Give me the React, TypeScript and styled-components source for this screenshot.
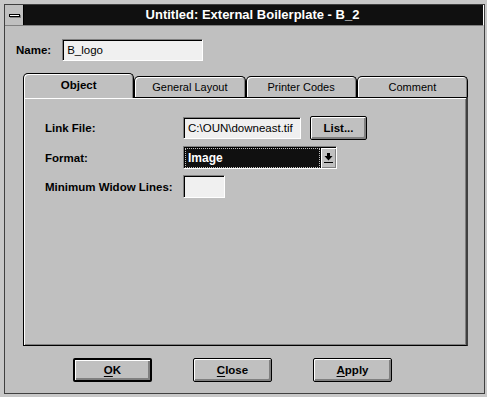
import React from 'react';
import styled, { createGlobalStyle } from 'styled-components';

const GlobalStyle = createGlobalStyle`
  html, body {
    margin: 0;
    padding: 0;
    background: #c8c8c8;
  }
  body {
    font-family: 'Liberation Sans', Arial, sans-serif;
  }
`;

const Screen = styled.div`
  width: 487px;
  height: 397px;
  box-sizing: border-box;
  padding: 4px 2px 3px 4px;
`;

const Window = styled.div`
  height: 100%;
  box-sizing: border-box;
  border: 1px solid #404040;
  background: #c0c0c0;
  display: flex;
  flex-direction: column;
`;

const TitleBar = styled.div`
  height: 20px;
  display: flex;
  background: #101010;
  border-bottom: 1px solid #808080;
  border-right: 1px solid #fff;
`;

const SysMenu = styled.div`
  width: 18px;
  background: #c0c0c0;
  border-right: 1px solid #000;
  display: flex;
  align-items: center;
  justify-content: center;
`;

const SysDash = styled.div`
  width: 9px;
  height: 1px;
  background: #fff;
  border: 1px solid #000;
  box-shadow: 1px 1px 0 #808080;
`;

const Title = styled.div`
  flex: 1;
  color: #fff;
  font-weight: bold;
  font-size: 13px;
  line-height: 20px;
  text-align: center;
  padding-right: 2px;
`;

const Body = styled.div`
  flex: 1;
  display: flex;
  flex-direction: column;
  padding-top: 13px;
`;

const NameRow = styled.div`
  display: flex;
  align-items: center;
  padding-left: 11px;
  gap: 11px;
`;

const Label = styled.span`
  font-weight: bold;
  font-size: 11.5px;
  color: #000;
`;

const Field = styled.div<{ w: number; h?: number }>`
  width: ${(p) => p.w}px;
  height: ${(p) => p.h ?? 22}px;
  box-sizing: border-box;
  background: #f0f0f0;
  border: 1px solid;
  border-color: #808080 #fff #fff #808080;
  box-shadow: inset 1px 1px 0 #000;
  font-size: 11.5px;
  color: #000;
  display: flex;
  align-items: center;
  padding-left: 4px;
`;

const TabArea = styled.div`
  margin: 11px 0 0 18px;
  width: 445px;
`;

const TabRow = styled.div`
  display: grid;
  grid-template-columns: repeat(4, 1fr);
  height: 25px;
  align-items: end;
`;

const Tab = styled.div<{ active?: boolean }>`
  position: relative;
  z-index: ${(p) => (p.active ? 2 : 1)};
  height: ${(p) => (p.active ? 25 : 21)}px;
  margin-bottom: ${(p) => (p.active ? -1 : 0)}px;
  box-sizing: border-box;
  background: #c0c0c0;
  border: 1px solid #000;
  border-bottom: none;
  border-radius: 5px 5px 0 0;
  box-shadow: inset 1px 1px 0 #fff, inset -1px 0 0 #808080;
  display: flex;
  align-items: center;
  justify-content: center;
  padding-bottom: ${(p) => (p.active ? 3 : 0)}px;
  font-size: ${(p) => (p.active ? 11.5 : 11)}px;
  font-weight: ${(p) => (p.active ? 'bold' : 'normal')};
  color: #000;
`;

const Panel = styled.div`
  height: 249px;
  box-sizing: border-box;
  border: 1px solid #000;
  border-right: 2px solid #404040;
  box-shadow: inset 1px 1px 0 #fff, inset -1px -1px 0 #808080;
  display: grid;
  grid-template-columns: 138px auto;
  grid-auto-rows: min-content;
  align-items: center;
  row-gap: 6px;
  padding: 18px 0 0 21px;
`;

const Controls = styled.div`
  display: flex;
  align-items: center;
  gap: 9px;
`;

const Button = styled.button<{ isDefault?: boolean; w: number; h: number }>`
  width: ${(p) => p.w}px;
  height: ${(p) => p.h}px;
  box-sizing: border-box;
  background: #c0c0c0;
  border: ${(p) => (p.isDefault ? 2 : 1)}px solid #000;
  border-radius: 2px;
  box-shadow: inset 1px 1px 0 #fff, inset -2px -2px 0 #808080;
  font-family: 'Liberation Sans', Arial, sans-serif;
  font-weight: bold;
  font-size: 11.5px;
  color: #000;
  padding: 0 0 1px;
  cursor: default;

  u {
    text-decoration-thickness: 1px;
    text-underline-offset: 2px;
  }
`;

const Select = styled.div`
  width: 154px;
  height: 23px;
  box-sizing: border-box;
  display: flex;
  border: 1px solid;
  border-color: #808080 #fff #fff #808080;
  box-shadow: inset 1px 1px 0 #000;
  padding: 1px 0 0 1px;
`;

const SelectValue = styled.div`
  flex: 1;
  background: #101010;
  border: 1px dotted #c0c0c0;
  color: #fff;
  font-weight: bold;
  font-size: 12px;
  display: flex;
  align-items: center;
  padding-left: 2px;
`;

const ArrowButton = styled.div`
  width: 15px;
  background: #c0c0c0;
  border-left: 1px solid #000;
  box-shadow: inset 1px 1px 0 #fff, inset -1px -1px 0 #808080;
  display: flex;
  align-items: center;
  justify-content: center;
`;

const ButtonRow = styled.div`
  display: flex;
  gap: 41px;
  padding: 12px 0 0 68px;
`;

const DownArrow = () => (
  <svg width="9" height="11" viewBox="0 0 9 11">
    <rect x="3" y="0" width="3" height="3" fill="#000" />
    <polygon points="0.5,3 8.5,3 4.5,7.5" fill="#000" />
    <rect x="0" y="9" width="9" height="1" fill="#000" />
  </svg>
);

const tabs = ['Object', 'General Layout', 'Printer Codes', 'Comment'];

export default function App() {
  return (
    <>
      <GlobalStyle />
      <Screen>
        <Window>
          <TitleBar>
            <SysMenu>
              <SysDash />
            </SysMenu>
            <Title>Untitled: External Boilerplate - B_2</Title>
          </TitleBar>
          <Body>
            <NameRow>
              <Label>Name:</Label>
              <Field w={141}>B_logo</Field>
            </NameRow>
            <TabArea>
              <TabRow>
                {tabs.map((t, i) => (
                  <Tab key={t} active={i === 0}>
                    {t}
                  </Tab>
                ))}
              </TabRow>
              <Panel>
                <Label>Link File:</Label>
                <Controls>
                  <Field w={118}>C:\OUN\downeast.tif</Field>
                  <Button w={57} h={24}>
                    List...
                  </Button>
                </Controls>
                <Label>Format:</Label>
                <Select>
                  <SelectValue>Image</SelectValue>
                  <ArrowButton>
                    <DownArrow />
                  </ArrowButton>
                </Select>
                <Label>Minimum Widow Lines:</Label>
                <Field w={42} h={23} />
              </Panel>
            </TabArea>
            <ButtonRow>
              <Button isDefault w={79} h={24}>
                <u>O</u>K
              </Button>
              <Button w={79} h={24}>
                <u>C</u>lose
              </Button>
              <Button w={79} h={24}>
                <u>A</u>pply
              </Button>
            </ButtonRow>
          </Body>
        </Window>
      </Screen>
    </>
  );
}
